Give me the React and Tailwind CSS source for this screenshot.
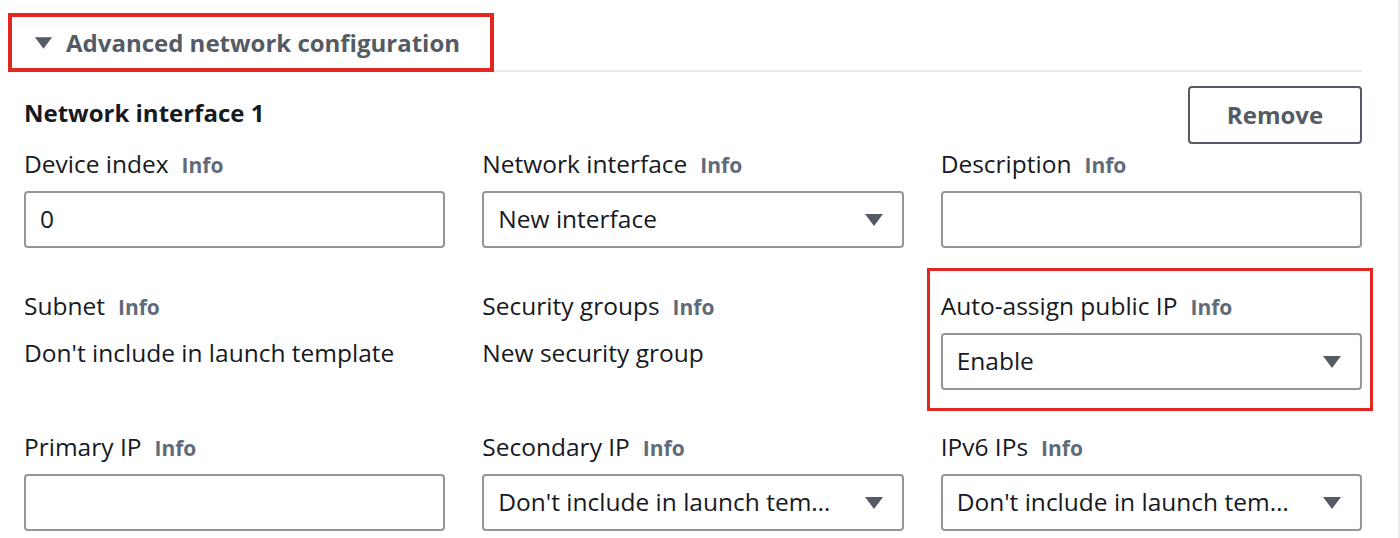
import React from 'react';

const Caret = ({ className }) => (
    <svg viewBox="0 0 20 14" className={className} aria-hidden="true">
        <path d="M1 1h18L10 13z" fill="currentColor" />
    </svg>
);

const Label = ({ text }) => (
    <div className="flex items-baseline gap-[13px] h-[32px] leading-[32px]">
        <span className="text-[24.5px] text-[#16191f]">{text}</span>
        <span className="text-[21px] font-bold text-[#5f6b7a]">Info</span>
    </div>
);

const TextInput = ({ value }) => (
    <div className="h-[57px] border-2 border-[#8f969c] rounded-[4px] px-[14px] flex items-center text-[24.5px] text-[#16191f]">
        {value}
    </div>
);

const Select = ({ value }) => (
    <div className="h-[57px] border-2 border-[#8f969c] rounded-[4px] pl-[14px] pr-[18px] flex items-center justify-between text-[24.5px] text-[#16191f]">
        <span className="whitespace-nowrap">{value}</span>
        <Caret className="w-[20px] h-[14px] shrink-0 ml-[20px] text-[#545b64]" />
    </div>
);

const Field = ({ label, children }) => (
    <div className="flex flex-col">
        <Label text={label} />
        <div className="mt-[11px]">{children}</div>
    </div>
);

const ReadOnly = ({ label, value }) => (
    <div className="flex flex-col">
        <Label text={label} />
        <div className="mt-[15px] h-[32px] leading-[32px] text-[24.5px] text-[#16191f]">{value}</div>
    </div>
);

export default function App() {
    return (
        <div className="w-[1400px] h-[538px] bg-white overflow-hidden border-r-2 border-[#e9e9ec] font-['Open_Sans',sans-serif]">
            <div className="pt-[13px] pl-[8px] pr-[36px]">
                <div className="flex items-end border-b-2 border-[#ebe7eb]">
                    <div className="flex items-center gap-[13px] h-[59px] w-[486px] border-[4px] border-[#e3261f] pl-[22px] -mb-[2px]">
                        <Caret className="w-[19px] h-[14px] text-[#545b64]" />
                        <span className="text-[24px] font-bold text-[#545b64]">Advanced network configuration</span>
                    </div>
                </div>
            </div>

            <div className="pl-[24px] pr-[36px]">
                <div className="flex items-center justify-between mt-[14px]">
                    <span className="text-[24px] font-bold text-[#16191f] -mt-[4px]">Network interface 1</span>
                    <button className="w-[174px] h-[58px] border-2 border-[#545b64] rounded-[4px] text-[24px] font-bold text-[#545b64]">
                        Remove
                    </button>
                </div>

                <div className="grid grid-cols-3 gap-x-[37px] mt-[4px]">
                    <Field label="Device index">
                        <TextInput value="0" />
                    </Field>
                    <Field label="Network interface">
                        <Select value="New interface" />
                    </Field>
                    <Field label="Description">
                        <TextInput value="" />
                    </Field>
                </div>

                <div className="grid grid-cols-3 gap-x-[37px] mt-[42px] items-start">
                    <ReadOnly label="Subnet" value="Don't include in launch template" />
                    <ReadOnly label="Security groups" value="New security group" />
                    <div className="-ml-[14px] -mr-[11px] -mt-[22px] border-[3px] border-[#e3261f] pl-[11px] pr-[8px] pt-[19px] pb-[18px]">
                        <Field label="Auto-assign public IP">
                            <Select value="Enable" />
                        </Field>
                    </div>
                </div>

                <div className="grid grid-cols-3 gap-x-[37px] mt-[20px]">
                    <Field label="Primary IP">
                        <TextInput value="" />
                    </Field>
                    <Field label="Secondary IP">
                        <Select value="Don't include in launch tem…" />
                    </Field>
                    <Field label="IPv6 IPs">
                        <Select value="Don't include in launch tem…" />
                    </Field>
                </div>
            </div>
        </div>
    );
}
